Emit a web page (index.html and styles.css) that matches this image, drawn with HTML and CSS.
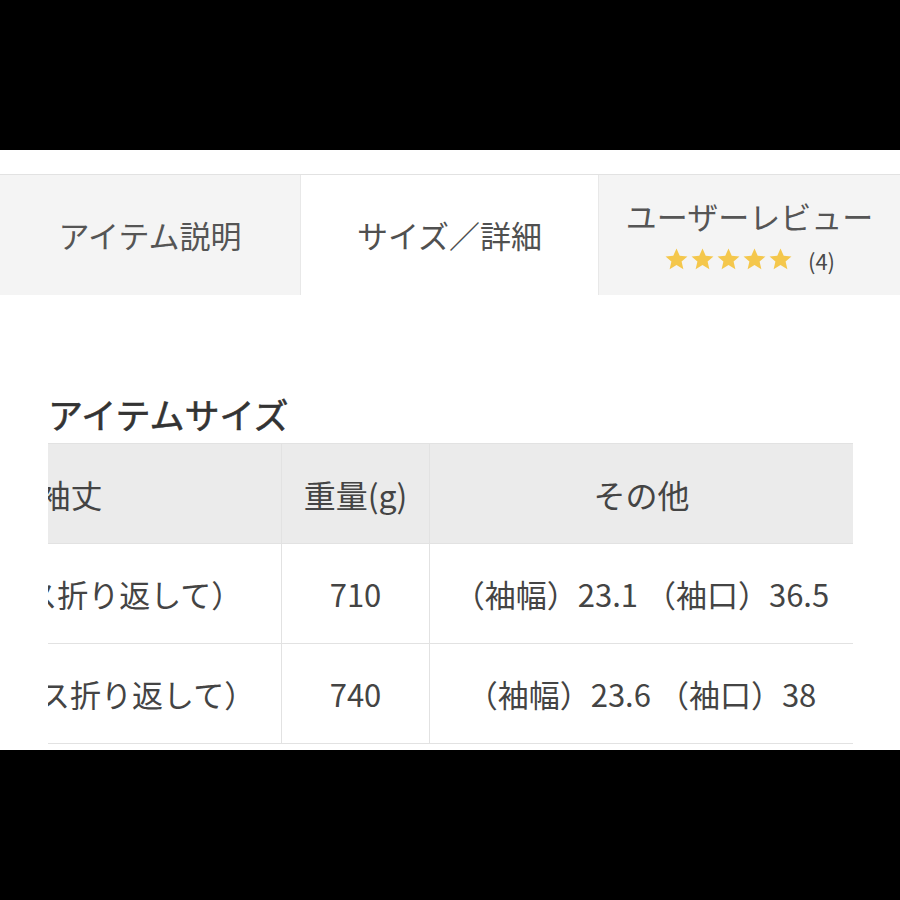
FILE: index.html
```html
<!DOCTYPE html>
<html lang="ja">
<head>
<meta charset="utf-8">
<link rel="stylesheet" href="styles.css">
</head>
<body>
<div class="page">
  <div class="tabs">
    <div class="tab tab-off">アイテム説明</div>
    <div class="tab tab-on">サイズ／詳細</div>
    <div class="tab tab-off tab-review">
      <div class="tab-title">ユーザーレビュー</div>
      <div class="rating">
        <span class="stars">
          <svg viewBox="0 0 24 24"><path d="M12 1.5l3.1 7 7.4.6-5.6 4.9 1.7 7.3L12 17.4l-6.6 3.9 1.7-7.3-5.6-4.9 7.4-.6z"/></svg>
          <svg viewBox="0 0 24 24"><path d="M12 1.5l3.1 7 7.4.6-5.6 4.9 1.7 7.3L12 17.4l-6.6 3.9 1.7-7.3-5.6-4.9 7.4-.6z"/></svg>
          <svg viewBox="0 0 24 24"><path d="M12 1.5l3.1 7 7.4.6-5.6 4.9 1.7 7.3L12 17.4l-6.6 3.9 1.7-7.3-5.6-4.9 7.4-.6z"/></svg>
          <svg viewBox="0 0 24 24"><path d="M12 1.5l3.1 7 7.4.6-5.6 4.9 1.7 7.3L12 17.4l-6.6 3.9 1.7-7.3-5.6-4.9 7.4-.6z"/></svg>
          <svg viewBox="0 0 24 24"><path d="M12 1.5l3.1 7 7.4.6-5.6 4.9 1.7 7.3L12 17.4l-6.6 3.9 1.7-7.3-5.6-4.9 7.4-.6z"/></svg>
        </span>
        <span class="count">(4)</span>
      </div>
    </div>
  </div>

  <h2 class="section-title">アイテムサイズ</h2>

  <div class="table-scroll">
    <table class="size-table">
      <thead>
        <tr>
          <th class="c1">袖丈</th>
          <th class="c2">重量(g)</th>
          <th class="c3">その他</th>
        </tr>
      </thead>
      <tbody>
        <tr>
          <td class="c1">58（カフス折り返して）</td>
          <td class="c2">710</td>
          <td class="c3">（袖幅）23.1 （袖口）36.5</td>
        </tr>
        <tr>
          <td class="c1">60.5（カフス折り返して）</td>
          <td class="c2">740</td>
          <td class="c3">（袖幅）23.6 （袖口）38</td>
        </tr>
      </tbody>
    </table>
  </div>
</div>
</body>
</html>
```

FILE: styles.css
```css
html, body {
  margin: 0;
  padding: 0;
  background: #000;
}

body {
  padding-top: 150px;
  font-family: "Noto Sans CJK JP", "Noto Sans", sans-serif;
  color: #444;
}

.page {
  background: #fff;
  height: 600px;
  padding-top: 24px;
  box-sizing: border-box;
  overflow: hidden;
}

.tabs {
  display: grid;
  grid-template-columns: 300px 299px 301px;
  border-top: 1px solid #e2e2e2;
  height: 120px;
}

.tab {
  display: flex;
  flex-direction: column;
  align-items: center;
  justify-content: center;
  font-size: 31px;
  color: #555;
  line-height: 40px;
}

.tab-off {
  background: #f4f4f4;
}

.tab-on {
  background: #fff;
  border-left: 1px solid #e8e8e8;
  border-right: 1px solid #e8e8e8;
  color: #505050;
}

.tab-review {
  justify-content: flex-start;
  padding-top: 21px;
}

.tab-title {
  line-height: 40px;
}

.rating {
  display: flex;
  align-items: center;
  gap: 15px;
  margin-top: 11px;
  height: 25px;
}

.stars {
  display: flex;
  gap: 1px;
}

.stars svg {
  width: 25px;
  height: 25px;
  fill: #f4c74c;
}

.count {
  font-size: 22px;
  line-height: 28px;
  color: #4a4a4a;
}

.section-title {
  margin: 99px 0 0 48px;
  font-size: 35px;
  line-height: 40px;
  font-weight: normal;
  color: #333;
  -webkit-text-stroke: 0.6px #333;
}

.table-scroll {
  margin: 9px 0 0 48px;
  width: 805px;
  overflow: hidden;
}

.size-table {
  margin-left: -189px;
  border-collapse: collapse;
  table-layout: fixed;
  width: 991px;
  font-size: 31px;
  color: #444;
}

.size-table th,
.size-table td {
  height: 99px;
  padding: 0;
  border: 1px solid #e2e2e2;
  text-align: center;
  white-space: nowrap;
  font-weight: normal;
}

.size-table th {
  background: #ebebeb;
  color: #444;
  font-size: 32px;
}

.size-table .c1 { width: 421px; }
.size-table .c2 { width: 147px; }
.size-table .c3 { width: 423px; }
```
